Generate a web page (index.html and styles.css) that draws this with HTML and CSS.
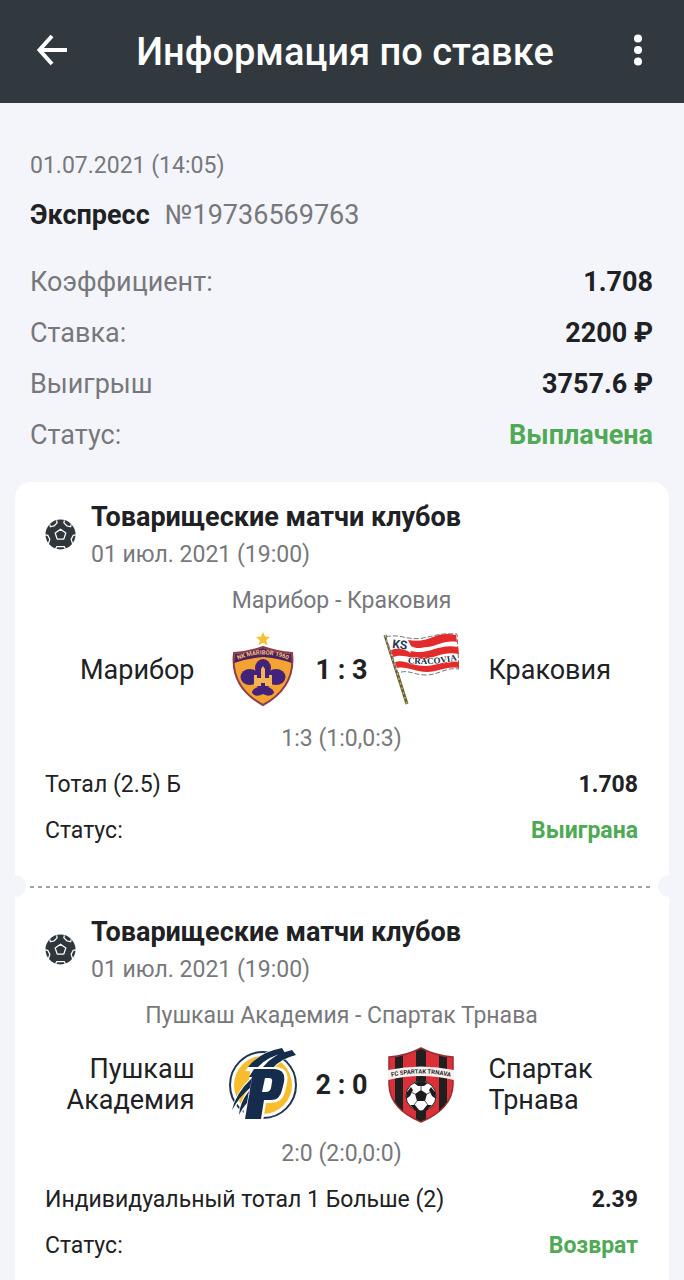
FILE: index.html
```html
<!DOCTYPE html>
<html lang="ru">
<head>
  <meta charset="UTF-8">
  <meta name="viewport" content="width=device-width, initial-scale=1.0">
  <title>Информация по ставке</title>
  <link rel="stylesheet" href="styles.css">
</head>
<body>
  <!-- shared ball icon -->
  <svg class="sprite" aria-hidden="true">
    <symbol id="ball" viewBox="0 0 32 32">
      <circle cx="16" cy="16" r="15.5" fill="#2f373d"/>
      <g fill="none" stroke="#fff" stroke-width="1.3" stroke-linejoin="round">
        <path d="M16 10.5l5.5 4-2.1 6.3h-6.8l-2.1-6.3z"/>
        <path d="M5 5.500l.5 2.500 4-1 3-3-.5-2.500"/>
        <path d="M27 5.500l-.5 2.500-4-1-3-3 .5-2.500"/>
        <path d="M0 16.500l3 .5 2 4-1.500 4.500-2 .5"/>
        <path d="M32 16.500l-3 .5-2 4 1.500 4.500 2 .5"/>
        <path d="M11 31l1-2.500h8l1 2.500"/>
      </g>
    </symbol>
  </svg>

  <header class="topbar">
    <button class="icon-btn" aria-label="Назад">
      <svg width="32" height="32" viewBox="0 0 32 32" fill="none" stroke="#fff" stroke-width="4">
        <path d="M31 16H4M16 2L3.500 16 16 30"/>
      </svg>
    </button>
    <h1>Информация по ставке</h1>
    <button class="icon-btn" aria-label="Меню">
      <svg width="32" height="32" viewBox="0 0 32 32" fill="#fff">
        <circle cx="16" cy="4.500" r="4"/>
        <circle cx="16" cy="16" r="4"/>
        <circle cx="16" cy="27.500" r="4"/>
      </svg>
    </button>
  </header>

  <main>
    <section class="summary">
      <div class="summary-date">01.07.2021 (14:05)</div>
      <div class="summary-type"><b>Экспресс</b> <span>№19736569763</span></div>
      <dl class="summary-rows">
        <div class="summary-row"><dt>Коэффициент:</dt><dd>1.708</dd></div>
        <div class="summary-row"><dt>Ставка:</dt><dd>2200 ₽</dd></div>
        <div class="summary-row"><dt>Выигрыш</dt><dd>3757.6 ₽</dd></div>
        <div class="summary-row"><dt>Статус:</dt><dd class="green">Выплачена</dd></div>
      </dl>
    </section>

    <div class="card">
      <article class="leg">
        <div class="leg-head">
          <svg class="ball"><use href="#ball"/></svg>
          <div>
            <h2>Товарищеские матчи клубов</h2>
            <div class="leg-date">01 июл. 2021 (19:00)</div>
          </div>
        </div>
        <div class="caption">Марибор - Краковия</div>
        <div class="match">
          <div class="team home">Марибор</div>
          <svg class="logo" viewBox="0 0 76 76">
            <path d="M38 0l2 4.500 5 .5-3.800 3.200 1.200 5L38 10.500l-4.400 2.700 1.200-5L31 5l5-.5z" fill="#f5c22b"/>
            <path d="M9 21Q24 20 38 15Q52 20 67 21Q71 55 38 73Q5 55 9 21z" fill="#f4a332" stroke="#8e3d4d" stroke-width="2"/>
            <path d="M10 22Q25 21 38 16Q51 21 66 22L67 31Q52 26 38 25Q24 26 9 31z" fill="#4b2260"/>
            <path id="arc" d="M8 30Q38 15 68 30" fill="none"/>
            <text font-size="6" font-weight="700" fill="#efbd75" text-anchor="middle"><textPath href="#arc" startOffset="50%">NK MARIBOR 1960</textPath></text>
            <g fill="#43227b">
              <ellipse cx="38" cy="36" rx="8" ry="9"/>
              <ellipse cx="25" cy="45" rx="9.500" ry="8"/>
              <ellipse cx="51" cy="45" rx="9.500" ry="8"/>
              <path d="M30 42h16v11l-3 2q6 2 6 6-4 5-11 1-7 4-11-1 0-4 6-6l-3-2z"/>
            </g>
            <path d="M29 43h3v3h4v-9l2-3 2 3v9h4v-3h3v11h-7v-3h-4v3h-7z" fill="#f5b453"/>
          </svg>
          <div class="score">1 : 3</div>
          <svg class="logo" viewBox="0 0 76 76">
            <path d="M2 3L24 72" stroke="#675f32" stroke-width="3"/>
            <path d="M2 3L24 72" stroke="#c5b477" stroke-width="1.500" stroke-dasharray="2 3"/>
            <path d="M3 5C16 1 25 9 40 6S58 1 74 2L76 37C62 35 56 43 43 43S26 37 15 41z" fill="#fff" stroke="#777" stroke-width="1" stroke-dasharray="5 2"/>
            <g fill="#e32b2b">
              <path d="M25 8C35 10 43 8 50 5S64 1 73 3L74 10C60 8 55 14 45 15S34 17 28 14z"/>
              <path d="M8 18C16 14 25 20 37 20S58 12 75 15L76 22C60 19 53 26 41 27S22 21 10 25z"/>
              <path d="M12 30C21 27 29 34 42 34S60 28 76 30L76 36C62 34 56 40 44 40S24 34 14 36z"/>
            </g>
            <path d="M4 6Q15 5 24 8L28 21Q17 14 8 18z" fill="#fff"/>
            <text x="9" y="16" font-size="12" font-weight="700" fill="#29384d" transform="rotate(6 9 16)">KS</text>
            <path id="wave" d="M23 31Q48 34 76 28" fill="none"/>
            <text class="flag-name" font-size="9" font-weight="700" fill="#222c47" stroke="#fff" stroke-width="1" paint-order="stroke" text-anchor="middle"><textPath href="#wave" startOffset="50%">CRACOVIA</textPath></text>
          </svg>
          <div class="team away">Краковия</div>
        </div>
        <div class="caption">1:3 (1:0,0:3)</div>
        <dl class="leg-rows">
          <div class="leg-row"><dt>Тотал (2.5) Б</dt><dd>1.708</dd></div>
          <div class="leg-row"><dt>Статус:</dt><dd class="green">Выиграна</dd></div>
        </dl>
      </article>

      <article class="leg">
        <div class="leg-head">
          <svg class="ball"><use href="#ball"/></svg>
          <div>
            <h2>Товарищеские матчи клубов</h2>
            <div class="leg-date">01 июл. 2021 (19:00)</div>
          </div>
        </div>
        <div class="caption">Пушкаш Академия - Спартак Трнава</div>
        <div class="match">
          <div class="team home">Пушкаш Академия</div>
          <svg class="logo" viewBox="0 0 76 76">
            <circle cx="38" cy="38" r="33" fill="#fff" stroke="#203552" stroke-width="2"/>
            <circle cx="38" cy="38" r="29" fill="#f7bd2d"/>
            <path d="M20 24Q34 4 57 0L67 0 71 8Q55 12 46 25z" fill="#fff"/>
            <path d="M23 20Q35 5 57 1L60 6Q43 9 33 20zM38 20Q48 7 67 3L71 8Q55 12 48 21z" fill="#162c4d"/>
            <path d="M26 20h25q14 1 11 16l-2 9q-3 11-14 11h-5l-3 19H17z" fill="#fff"/>
            <path fill-rule="evenodd" d="M29 22h21q11 1 9 13l-2 8q-2 10-11 10h-7l-3 19H20l7-42h-3zM40 31l-3 14h4q4 0 5-4l1-6q1-4-3-4z" fill="#162c4d"/>
            <path d="M25 34Q12 48 8 63M23 46Q17 56 15 67" fill="none" stroke="#fff" stroke-width="4"/>
            <path d="M27 31Q11 46 7 63 15 49 25 41zM24 44Q15 55 14 68 18 60 22 56z" fill="#162c4d"/>
          </svg>
          <div class="score">2 : 0</div>
          <svg class="logo" viewBox="0 0 76 76">
            <clipPath id="shield"><path d="M38 1Q53 9 70 10V38Q69 62 38 75Q7 62 6 38V10Q23 9 38 1z"/></clipPath>
            <g clip-path="url(#shield)">
              <path d="M0 0h76v76H0z" fill="#dc3038"/>
              <path d="M12 0h8v76h-8zM33 0h10v76H33zM56 0h8v76h-8z" fill="#211e20"/>
            </g>
            <path d="M38 1Q53 9 70 10V38Q69 62 38 75Q7 62 6 38V10Q23 9 38 1z" fill="none" stroke="#962e33" stroke-width="1.500"/>
            <path d="M5 23Q38 16 71 23v10Q38 25 5 33z" fill="#f8f1ef"/>
            <path id="ribbon" d="M3 31Q38 22 73 31" fill="none"/>
            <text font-size="6" font-weight="700" fill="#222" text-anchor="middle"><textPath href="#ribbon" startOffset="50%">FC SPARTAK TRNAVA</textPath></text>
            <circle cx="38" cy="49" r="15" fill="#fff" stroke="#222" stroke-width="1"/>
            <g fill="#1d1b1c">
              <path d="M38 43l6 4-2 7h-8l-2-7z"/>
              <path d="M31 36l7-2 7 2-4 3h-6zM24 45l4-5 2 3-3 6-4 3zM52 45l-4-5-2 3 3 6 4 3zM27 58l5 0 4 5-3 1zM49 58l-5 0-4 5 3 1z"/>
            </g>
            <path d="M38 39v4M44 47l4-2M42 54l3 4M34 54l-3 4M32 47l-4-2" stroke="#555" stroke-width="1"/>
          </svg>
          <div class="team away">Спартак Трнава</div>
        </div>
        <div class="caption">2:0 (2:0,0:0)</div>
        <dl class="leg-rows">
          <div class="leg-row"><dt>Индивидуальный тотал 1 Больше (2)</dt><dd>2.39</dd></div>
          <div class="leg-row"><dt>Статус:</dt><dd class="green">Возврат</dd></div>
        </dl>
      </article>
    </div>
  </main>
</body>
</html>
```
FILE: styles.css
```css
* {
  box-sizing: border-box;
}

body {
  margin: 0;
  height: 100vh;
  overflow: hidden;
  background-color: #f4f5fa;
  color: #202124;
  font-family: Roboto, sans-serif;
}

h1, h2, dl, dd {
  margin: 0;
}

.sprite {
  display: none;
}

/* header */
.topbar {
  display: flex;
  align-items: center;
  justify-content: space-between;
  height: 103px;
  padding: 0 24px 0 30px;
  background-color: #31393f;
}

.topbar h1 {
  color: #fff;
  font-size: 38px;
  font-weight: 500;
}

.icon-btn {
  width: 44px;
  height: 48px;
  padding: 0 6px 4px;
  border: none;
  background: none;
  cursor: pointer;
}

.icon-btn svg {
  display: block;
}

/* bet summary */
.summary {
  padding: 47px 31px 21px 30px;
}

.summary-date {
  color: #77787c;
  font-size: 23px;
  line-height: 32px;
}

.summary-type {
  display: flex;
  gap: 15px;
  margin-top: 15px;
  font-size: 27px;
  line-height: 36px;
}

.summary-type span {
  color: #77787c;
}

.summary-rows {
  margin-top: 24px;
}

.summary-row,
.leg-row {
  display: flex;
  justify-content: space-between;
}

.summary-row {
  font-size: 27px;
  line-height: 51px;
}

.summary-row dt {
  color: #77787c;
}

dd {
  font-weight: 700;
}

.green {
  color: #4fa955;
}

/* ticket */
.card {
  margin: 0 15px;
  border-radius: 16px;
  background-color: #fff;
}

.leg {
  position: relative;
  padding: 17px 31px 32px 30px;
}

.leg + .leg {
  padding-top: 28px;
  background: repeating-linear-gradient(to right, #a3a3a5 0 4px, transparent 4px 8px) 15px 0 / calc(100% - 34px) 2px no-repeat;
}

/* notches cut in the ticket sides */
.leg + .leg::before,
.leg + .leg::after {
  content: "";
  position: absolute;
  top: -11px;
  width: 22px;
  height: 22px;
  border-radius: 50%;
  background-color: #f4f5fa;
}

.leg + .leg::before {
  left: -11px;
}

.leg + .leg::after {
  right: -11px;
}

.leg-head {
  display: flex;
  gap: 15px;
}

.ball {
  width: 31px;
  height: 31px;
  margin-top: 20px;
}

.leg-head h2 {
  font-size: 27px;
  font-weight: 700;
  line-height: 36px;
}

.leg-date {
  color: #77787c;
  font-size: 23px;
  line-height: 40px;
}

.caption {
  margin-top: 10px;
  color: #77787c;
  font-size: 23px;
  line-height: 32px;
  text-align: center;
}

.match {
  display: grid;
  grid-template-columns: 1fr 76px 82px 76px 1fr;
  align-items: center;
  margin-top: 15px;
}

.match + .caption {
  margin-top: 15px;
}

.team {
  font-size: 27px;
  line-height: 31px;
}

.home {
  padding-right: 30px;
  text-align: right;
}

.away {
  padding-left: 30px;
}

.logo {
  width: 76px;
  height: 76px;
}

.flag-name {
  font-family: "Liberation Serif", serif;
}

.score {
  font-size: 27px;
  font-weight: 700;
  text-align: center;
}

.leg-rows {
  margin-top: 7px;
}

.leg-row {
  font-size: 23px;
  line-height: 46px;
}
```
